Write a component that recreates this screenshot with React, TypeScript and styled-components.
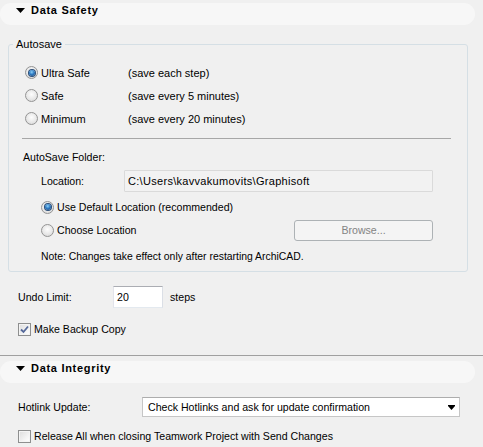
import React from "react";
import styled, { createGlobalStyle } from "styled-components";

const GlobalStyle = createGlobalStyle`
  html, body {
    margin: 0;
    padding: 0;
    background: #f0f0f0;
  }
  body {
    font-family: "Liberation Sans", Arial, sans-serif;
    font-size: 10.6px;
    color: #000;
  }
`;

const Page = styled.div`
  width: 483px;
  height: 447px;
  padding-top: 3px;
  box-sizing: border-box;
  display: flex;
  flex-direction: column;
  overflow: hidden;
`;

const SectionBar = styled.div<{ $top?: number }>`
  height: 22px;
  margin: ${(p) => p.$top ?? 0}px 8px 0 0;
  border-radius: 11px;
  background: #f7f7f7;
  display: flex;
  align-items: flex-start;
  gap: 6px;
  padding-left: 16px;
  line-height: 14px;
  font-weight: bold;
  font-size: 11px;
  letter-spacing: 0.7px;
`;

const Caret = styled.svg`
  width: 9px;
  height: 5px;
  margin-top: 5px;
  flex: none;
`;

const GroupBox = styled.fieldset`
  margin: 12px 15px 0 8px;
  padding: 0 0 8px 0;
  border: 1px solid #d5dfe5;
  border-radius: 3px;
  min-width: 0;
`;

const Legend = styled.legend`
  margin-left: 4px;
  padding: 0 3px;
  line-height: 14px;
  font-size: 11px;
`;

const OptionGrid = styled.div`
  display: grid;
  grid-template-columns: 103px auto;
  grid-auto-rows: 23px;
  align-items: center;
  padding: 10px 0 0 16px;
  font-size: 11px;
`;

const Choice = styled.label`
  display: flex;
  align-items: center;
  gap: 3px;
  white-space: nowrap;
`;

const RadioDot = styled.span<{ $checked?: boolean }>`
  width: 13px;
  height: 13px;
  box-sizing: border-box;
  border-radius: 50%;
  border: 1px solid #949494;
  background: radial-gradient(circle at 50% 40%, #fdfdfd 0%, #e8e8e8 55%, #d2d2d2 100%);
  display: flex;
  align-items: center;
  justify-content: center;
  flex: none;
  &::after {
    content: "";
    display: ${(p) => (p.$checked ? "block" : "none")};
    width: 6px;
    height: 6px;
    border-radius: 50%;
    background: radial-gradient(circle at 45% 35%, #8fd2f7 0%, #2f7cc4 45%, #163f73 100%);
    box-shadow: 0 0 0 1px #2a4d78;
  }
`;

const Box = styled.span`
  width: 13px;
  height: 13px;
  box-sizing: border-box;
  border: 1px solid #8e8f8f;
  background: linear-gradient(135deg, #dcdcdc 0%, #f6f6f6 70%, #ffffff 100%);
  box-shadow: inset 0 0 0 1px #f4f4f4;
  display: flex;
  align-items: center;
  justify-content: center;
  flex: none;
`;

const Rule = styled.div`
  height: 1px;
  background: #a7a7a7;
  margin: 8px 16px 0 13px;
`;

const SubHeading = styled.div`
  margin: 11px 0 0 14px;
  line-height: 14px;
`;

const FolderBlock = styled.div`
  padding: 0 34px 0 32px;
  display: flex;
  flex-direction: column;
`;

const Row = styled.div<{ $top: number; $h?: number }>`
  display: flex;
  align-items: center;
  height: ${(p) => p.$h ?? 20}px;
  margin-top: ${(p) => p.$top}px;
  white-space: nowrap;
`;

const FieldLabel = styled.span<{ $w: number }>`
  width: ${(p) => p.$w}px;
  flex: none;
`;

const PathField = styled.div`
  flex: 1;
  height: 22px;
  box-sizing: border-box;
  border: 1px solid #dadada;
  background: #f2f2f2;
  border-radius: 1px;
  display: flex;
  align-items: center;
  padding-left: 3px;
  font-size: 11px;
  letter-spacing: 0.3px;
`;

const Button = styled.button`
  margin-left: auto;
  width: 139px;
  height: 21px;
  border: 1px solid #adb2b5;
  border-radius: 3px;
  background: #f4f4f4;
  color: #838383;
  font: inherit;
  padding: 0 0 1px 0;
`;

const Note = styled.div`
  margin-top: 9px;
  font-size: 10.4px;
  line-height: 13px;
`;

const Section = styled.div`
  padding-left: 18px;
  display: flex;
  flex-direction: column;
`;

const TextInput = styled.div`
  width: 50px;
  height: 22px;
  box-sizing: border-box;
  border: 1px solid;
  border-color: #abadb3 #dbdfe6 #e3e9ef #e2e3ea;
  background: #fff;
  display: flex;
  align-items: center;
  padding-left: 3px;
`;

const Unit = styled.span`
  margin-left: 7px;
`;

const Divider = styled.div`
  height: 1px;
  background: #a0a0a0;
  margin-top: 16px;
`;

const Select = styled.div`
  width: 318px;
  height: 20px;
  box-sizing: border-box;
  border: 1px solid #c6c6c6;
  border-top-color: #adadad;
  background: #fff;
  display: flex;
  align-items: center;
  justify-content: space-between;
  padding: 0 4px 0 5px;
`;

const Radio: React.FC<{ checked?: boolean; children: React.ReactNode }> = ({ checked, children }) => (
  <Choice>
    <RadioDot $checked={checked} />
    {children}
  </Choice>
);

const Checkbox: React.FC<{ checked?: boolean; children: React.ReactNode }> = ({ checked, children }) => (
  <Choice>
    <Box>
      {checked && (
        <svg width="9" height="9" viewBox="0 0 9 9">
          <path d="M1 4.5 L3.5 7 L8 1.5" fill="none" stroke="#55699a" strokeWidth="1.8" />
        </svg>
      )}
    </Box>
    {children}
  </Choice>
);

const Header: React.FC<{ title: string; top?: number }> = ({ title, top }) => (
  <SectionBar $top={top}>
    <Caret viewBox="0 0 9 5">
      <path d="M0 0 H9 L4.5 5 Z" fill="#000" />
    </Caret>
    {title}
  </SectionBar>
);

export default function App() {
  return (
    <>
      <GlobalStyle />
      <Page>
        <Header title="Data Safety" />
        <GroupBox>
          <Legend>Autosave</Legend>
          <OptionGrid>
            <Radio checked>Ultra Safe</Radio>
            <span>(save each step)</span>
            <Radio>Safe</Radio>
            <span>(save every 5 minutes)</span>
            <Radio>Minimum</Radio>
            <span>(save every 20 minutes)</span>
          </OptionGrid>
          <Rule />
          <SubHeading>AutoSave Folder:</SubHeading>
          <FolderBlock>
            <Row $top={6} $h={22}>
              <FieldLabel $w={83}>Location:</FieldLabel>
              <PathField>C:\Users\kavvakumovits\Graphisoft</PathField>
            </Row>
            <Row $top={4} $h={22}>
              <Radio checked>Use Default Location (recommended)</Radio>
            </Row>
            <Row $top={1} $h={22}>
              <Radio>Choose Location</Radio>
              <Button disabled>Browse...</Button>
            </Row>
            <Note>Note: Changes take effect only after restarting ArchiCAD.</Note>
          </FolderBlock>
        </GroupBox>
        <Section>
          <Row $top={14} $h={22}>
            <FieldLabel $w={95}>Undo Limit:</FieldLabel>
            <TextInput>20</TextInput>
            <Unit>steps</Unit>
          </Row>
          <Row $top={11}>
            <Checkbox checked>Make Backup Copy</Checkbox>
          </Row>
        </Section>
        <Divider />
        <Header title="Data Integrity" top={5} />
        <Section>
          <Row $top={14}>
            <FieldLabel $w={124}>Hotlink Update:</FieldLabel>
            <Select>
              <span>Check Hotlinks and ask for update confirmation</span>
              <svg width="7" height="5" viewBox="0 0 7 5">
                <path d="M0 0 H7 V1 L3.5 5 L0 1 Z" fill="#000" />
              </svg>
            </Select>
          </Row>
          <Row $top={9}>
            <Checkbox>Release All when closing Teamwork Project with Send Changes</Checkbox>
          </Row>
        </Section>
      </Page>
    </>
  );
}
